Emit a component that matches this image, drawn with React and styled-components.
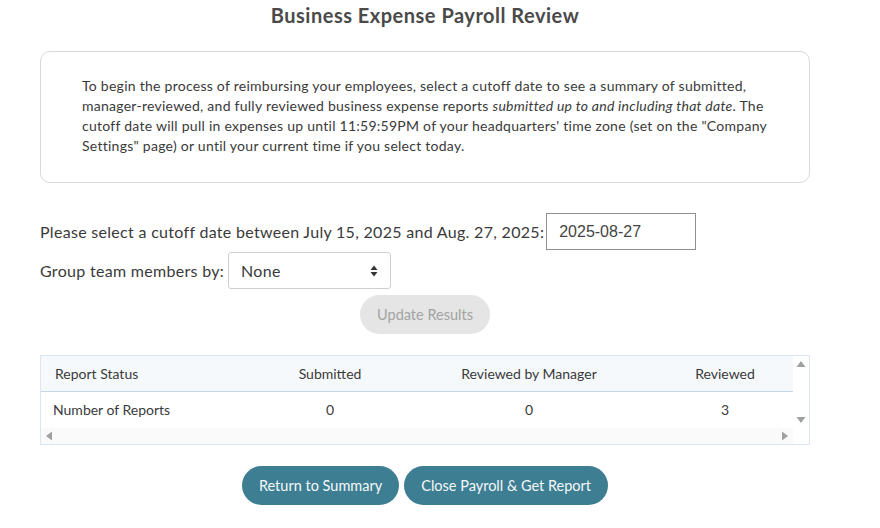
import React, { useState } from 'react';
import styled, { createGlobalStyle } from 'styled-components';

const GlobalStyle = createGlobalStyle`
    body {
        margin: 0;
        background: #fff;
        font-family: Lato, "Noto Sans", sans-serif;
        color: #333;
    }
`;

const Page = styled.div`
    width: 770px;
    margin-left: 40px;
    display: flex;
    flex-direction: column;
`;

const Title = styled.h1`
    margin: 0;
    font-size: 20px;
    letter-spacing: 0.5px;
    line-height: 31px;
    font-weight: 700;
    color: #4a4a4a;
    text-align: center;
`;

const InfoBox = styled.div`
    margin-top: 20px;
    border: 1px solid #d9d9d9;
    border-radius: 10px;
    padding: 24px 34px 26px 41px;
    font-size: 14px;
    letter-spacing: 0.26px;
    line-height: 20px;
    color: #3a3a3a;
`;

const Form = styled.div`
    margin-top: 30px;
    display: flex;
    flex-direction: column;
    gap: 2px;
`;

const FieldRow = styled.div`
    display: flex;
    align-items: center;
    gap: ${({ gap }) => gap || 2}px;
    font-size: 16px;
    letter-spacing: 0.3px;
    color: #3a3a3a;
`;

const DateInput = styled.input`
    box-sizing: border-box;
    width: 150px;
    height: 37px;
    border: 1px solid #8f8f8f;
    padding: 0 12px;
    font-family: "Liberation Sans", Arial, sans-serif;
    font-size: 16px;
    letter-spacing: 0;
    color: #444;
    outline: none;
`;

const SelectWrap = styled.div`
    position: relative;
    width: 163px;
    height: 37px;
`;

const Select = styled.select`
    appearance: none;
    box-sizing: border-box;
    width: 100%;
    height: 100%;
    border: 1px solid #cfcfcf;
    border-radius: 3px;
    background: #fff;
    padding: 0 12px;
    font-family: Lato, sans-serif;
    font-size: 16px;
    letter-spacing: 0.3px;
    color: #3a3a3a;
`;

const SelectIcon = styled.svg`
    position: absolute;
    right: 13px;
    top: 13px;
    pointer-events: none;
`;

const Centered = styled.div`
    display: flex;
    justify-content: center;
    gap: 5px;
    margin-top: ${({ top }) => top}px;
`;

const PillButton = styled.button`
    height: 39px;
    padding: 0 17px;
    border: none;
    border-radius: 20px;
    font-family: Lato, sans-serif;
    font-size: 14.5px;
    background: ${({ disabled }) => (disabled ? '#e4e5e4' : '#3e7e92')};
    color: ${({ disabled }) => (disabled ? '#a3a3a3' : '#f4f8fa')};
    cursor: ${({ disabled }) => (disabled ? 'default' : 'pointer')};
`;

const TableFrame = styled.div`
    margin-top: 21px;
    border: 1px solid #dde6ef;
    display: grid;
    grid-template-columns: 1fr 16px;
    grid-template-rows: 72px 16px;
    font-size: 14px;
    color: #3a3a3a;
`;

const TableBody = styled.div`
    overflow: hidden;
`;

const Grid = styled.div`
    display: grid;
    grid-template-columns: 218px 142px 256px 136px;
`;

const HeadCell = styled.div`
    height: 35px;
    line-height: 35px;
    background: #f6f9fb;
    border-bottom: 1px solid #c9d6e1;
    text-align: ${({ left }) => (left ? 'left' : 'center')};
    padding-left: ${({ left }) => (left ? 14 : 0)}px;
`;

const Cell = styled.div`
    height: 36px;
    line-height: 36px;
    text-align: ${({ left }) => (left ? 'left' : 'center')};
    padding-left: ${({ left }) => (left ? 12 : 0)}px;
`;

const ScrollTrack = styled.div`
    display: flex;
    flex-direction: ${({ vertical }) => (vertical ? 'column' : 'row')};
    justify-content: space-between;
    background: ${({ vertical }) => (vertical ? '#fff' : '#fafafa')};
`;

const Corner = styled.div`
    background: #fff;
`;

const ArrowSvg = styled.svg`
    display: block;
    flex: none;
`;

const arrows = {
    up: '3.5,11 8,5 12.5,11',
    down: '3.5,5 12.5,5 8,11',
    left: '5,8 11,3.5 11,12.5',
    right: '5,3.5 11,8 5,12.5',
};

function ScrollArrow({ dir }) {
    return (
        <ArrowSvg width="16" height="16" viewBox="0 0 16 16">
            <polygon points={arrows[dir]} fill="#a0a0a0" />
        </ArrowSvg>
    );
}

const columns = ['Report Status', 'Submitted', 'Reviewed by Manager', 'Reviewed'];
const counts = ['Number of Reports', '0', '0', '3'];

export default function App() {
    const [cutoff, setCutoff] = useState('2025-08-27');
    const [group, setGroup] = useState('none');

    return (
        <>
            <GlobalStyle />
            <Page>
                <Title>Business Expense Payroll Review</Title>

                <InfoBox>
                    To begin the process of reimbursing your employees, select a cutoff date to see a summary of submitted,
                    manager-reviewed, and fully reviewed business expense reports <em>submitted up to and including that date</em>.
                    The cutoff date will pull in expenses up until 11:59:59PM of your headquarters' time zone (set on the "Company
                    Settings" page) or until your current time if you select today.
                </InfoBox>

                <Form>
                    <FieldRow>
                        Please select a cutoff date between July 15, 2025 and Aug. 27, 2025:
                        <DateInput value={cutoff} onChange={(e) => setCutoff(e.target.value)} />
                    </FieldRow>
                    <FieldRow gap={4}>
                        Group team members by:
                        <SelectWrap>
                            <Select value={group} onChange={(e) => setGroup(e.target.value)}>
                                <option value="none">None</option>
                                <option value="department">Department</option>
                                <option value="manager">Manager</option>
                            </Select>
                            <SelectIcon width="8" height="12" viewBox="0 0 8 12">
                                <path d="M4 0.5 L7.5 5 H0.5 Z M4 11.5 L7.5 7 H0.5 Z" fill="#333" />
                            </SelectIcon>
                        </SelectWrap>
                    </FieldRow>
                </Form>

                <Centered top={6}>
                    <PillButton disabled>Update Results</PillButton>
                </Centered>

                <TableFrame>
                    <TableBody>
                        <Grid>
                            {columns.map((c, i) => (
                                <HeadCell key={c} left={i === 0}>{c}</HeadCell>
                            ))}
                            {counts.map((c, i) => (
                                <Cell key={i} left={i === 0}>{c}</Cell>
                            ))}
                        </Grid>
                    </TableBody>
                    <ScrollTrack vertical>
                        <ScrollArrow dir="up" />
                        <ScrollArrow dir="down" />
                    </ScrollTrack>
                    <ScrollTrack>
                        <ScrollArrow dir="left" />
                        <ScrollArrow dir="right" />
                    </ScrollTrack>
                    <Corner />
                </TableFrame>

                <Centered top={21}>
                    <PillButton>Return to Summary</PillButton>
                    <PillButton>Close Payroll &amp; Get Report</PillButton>
                </Centered>
            </Page>
        </>
    );
}
